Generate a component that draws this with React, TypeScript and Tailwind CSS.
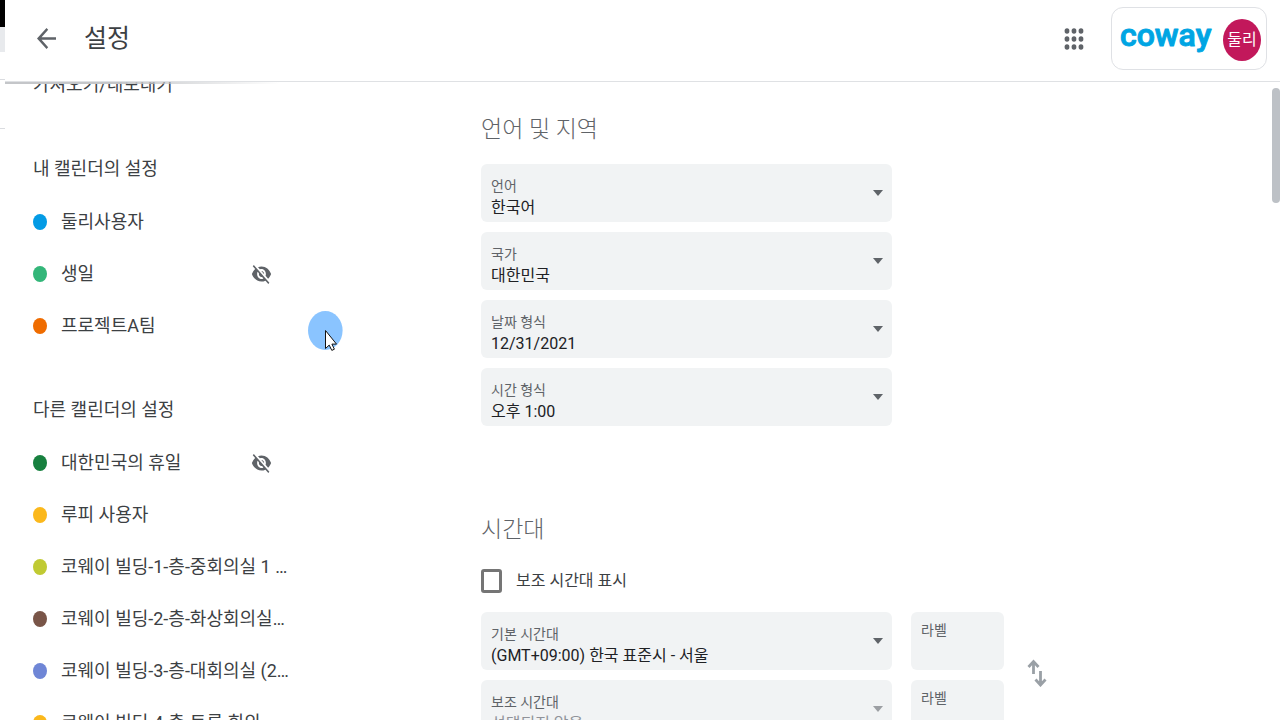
import { useId } from "react";
import { MdVisibilityOff } from "react-icons/md";
import clsx from "clsx";

type Calendar = { name: string; color: string; hidden?: boolean };

const MY_CALENDARS: Calendar[] = [
  { name: "둘리사용자", color: "bg-[#039be5]" },
  { name: "생일", color: "bg-[#33b679]", hidden: true },
  { name: "프로젝트A팀", color: "bg-[#ef6c00]" },
];

const OTHER_CALENDARS: Calendar[] = [
  { name: "대한민국의 휴일", color: "bg-[#17803f]", hidden: true },
  { name: "루피 사용자", color: "bg-[#fbb81c]" },
  { name: "코웨이 빌딩-1-층-중회의실 1 …", color: "bg-[#c0ca33]" },
  { name: "코웨이 빌딩-2-층-화상회의실…", color: "bg-[#795548]" },
  { name: "코웨이 빌딩-3-층-대회의실 (2…", color: "bg-[#6f86d6]" },
  { name: "코웨이 빌딩-4-층-토론 회의…", color: "bg-[#fbb81c]" },
];

function CalendarGroup({ title, items }: { title: string; items: Calendar[] }) {
  return (
    <section className="mt-8">
      <h2 className="mb-px flex h-[52px] items-center">{title}</h2>
      <ul>
        {items.map((item) => (
          <li key={item.name}>
            <a href="#" className="flex h-[52px] w-[239px] items-center gap-3.5 whitespace-nowrap">
              <span className={clsx("h-4 w-3.5 shrink-0 rounded-[50%]", item.color)} />
              <span className="flex-1">{item.name}</span>
              {item.hidden && (
                <MdVisibilityOff preserveAspectRatio="none" className="h-6 w-[21px] text-[#5f6368]" />
              )}
            </a>
          </li>
        ))}
      </ul>
    </section>
  );
}

function SelectField({ label, value, disabled }: { label: string; value: string; disabled?: boolean }) {
  const id = useId();
  return (
    <div className="relative h-[58px] rounded-md bg-[#f1f3f4] px-2.5 pt-3">
      <label htmlFor={id} className="block text-sm leading-5 text-[#5f6368]">
        {label}
      </label>
      <select
        id={id}
        disabled={disabled}
        className="block h-6 w-full appearance-none bg-transparent text-base leading-6 text-[#202124] disabled:text-[#90939a] disabled:opacity-100"
      >
        <option>{value}</option>
      </select>
      <svg
        viewBox="0 0 10 6"
        className={clsx(
          "pointer-events-none absolute top-[26px] right-[9px] h-1.5 w-2.5",
          disabled ? "fill-[#9c9fa3]" : "fill-[#5f6368]"
        )}
      >
        <path d="M0 0h10L5 6z" />
      </svg>
    </div>
  );
}

function LabelField() {
  const id = useId();
  return (
    <div className="h-[58px] rounded-md bg-[#f1f3f4] px-2.5 pt-2">
      <label htmlFor={id} className="block text-sm leading-5 text-[#5f6368]">
        라벨
      </label>
      <input id={id} type="text" className="block h-6 w-full bg-transparent text-base outline-none" />
    </div>
  );
}

function Header() {
  return (
    <header className="flex h-[82px] shrink-0 items-center border-b border-[#dfe1e4] pr-[13px] pb-1 pl-8">
      <button type="button" aria-label="뒤로">
        <svg viewBox="4 4 16 16" preserveAspectRatio="none" className="h-[21px] w-[19px] fill-[#5f6368]">
          <path d="M20 11H7.83l5.59-5.59L12 4l-8 8 8 8 1.41-1.41L7.83 13H20z" />
        </svg>
      </button>
      <h1 className="ml-7 text-[25px] leading-8 text-[#3c4043]">설정</h1>
      <button type="button" aria-label="앱" className="ml-auto">
        <svg viewBox="0 0 20 22" className="h-[22px] w-5 fill-[#5f6368]">
          {[3, 11, 19].map((y) =>
            [3, 10, 17].map((x) => <ellipse key={`${x}-${y}`} cx={x} cy={y} rx="2.4" ry="2.7" />)
          )}
        </svg>
      </button>
      <div className="ml-[27px] flex h-[63px] items-center rounded-xl border border-[#dfe1e5] pr-[5px] pl-2">
        <svg viewBox="0 0 93 40" className="h-10 w-[93px] overflow-visible" role="img" aria-label="coway">
          <text
            x="0"
            y="27"
            fontFamily="Roboto, sans-serif"
            fontSize="32"
            fontWeight="500"
            fill="#00a5e3"
            stroke="#00a5e3"
            strokeWidth="1"
            strokeLinejoin="round"
          >
            coway
          </text>
        </svg>
        <button
          type="button"
          className="mt-0.5 ml-2.5 h-[42px] w-[38px] rounded-[50%] bg-[#c2185b] text-base text-white"
        >
          둘리
        </button>
      </div>
    </header>
  );
}

function Pointer() {
  return (
    <div className="pointer-events-none absolute top-[311px] left-[308px]">
      <svg viewBox="0 0 35 42" className="h-[42px] w-[35px]">
        <ellipse cx="17.3" cy="19.5" rx="17.3" ry="19.5" fill="#8ac4ff" />
        <path
          d="M17.500 19.500v18l3.700-3.400 2.600 5.300 2.600-1.200-2.500-5.100h4.600z"
          fill="#fff"
          stroke="#111"
          strokeWidth="1"
        />
      </svg>
    </div>
  );
}

export default function App() {
  return (
    <div className="relative flex h-screen overflow-hidden bg-white font-['Roboto','Noto_Sans_CJK_KR',sans-serif] text-[#3c4043]">
      {/* sliver of the window behind */}
      <div className="w-[5px] shrink-0">
        <div className="h-[27px] bg-black" />
        <div className="h-[25px] bg-[#e8eaed]" />
        <div className="h-7 border-b border-[#dadce0]" />
        <div className="h-[49px] border-b border-[#dadce0]" />
      </div>

      <div className="flex min-w-0 flex-1 flex-col">
        <Header />
        <div className="relative flex min-h-0 flex-1 overflow-hidden">
          <div className="absolute top-0 left-0 h-0.5 w-[275px] bg-linear-to-r from-[#c4c6c9] from-40% to-transparent" />

          <nav className="-mt-[23px] w-[448px] shrink-0 pl-7 text-lg">
            <a href="#" className="flex h-[52px] items-center">
              가져오기/내보내기
            </a>
            <CalendarGroup title="내 캘린더의 설정" items={MY_CALENDARS} />
            <CalendarGroup title="다른 캘린더의 설정" items={OTHER_CALENDARS} />
          </nav>

          <main className="min-w-0 flex-1 pt-8 pl-7">
            <section>
              <h2 className="mb-[18px] text-[23px] leading-8 font-light text-[#5f6368]">언어 및 지역</h2>
              <div className="flex max-w-[411px] flex-col gap-2.5">
                <SelectField label="언어" value="한국어" />
                <SelectField label="국가" value="대한민국" />
                <SelectField label="날짜 형식" value="12/31/2021" />
                <SelectField label="시간 형식" value="오후 1:00" />
              </div>
            </section>

            <section className="mt-[88px]">
              <h2 className="mb-[18px] text-[23px] leading-8 font-light text-[#5f6368]">시간대</h2>
              <label className="mb-3.5 flex h-[34px] items-center gap-3.5 text-base">
                <input
                  type="checkbox"
                  className="h-6 w-[21px] appearance-none rounded-[3px] border-3 border-[#757575] checked:bg-[#1a73e8]"
                />
                보조 시간대 표시
              </label>
              <div className="flex items-center gap-[19px]">
                <div className="flex w-full max-w-[411px] flex-col gap-2.5">
                  <SelectField label="기본 시간대" value="(GMT+09:00) 한국 표준시 - 서울" />
                  <SelectField label="보조 시간대" value="선택되지 않음" disabled />
                </div>
                <div className="flex w-[93px] shrink-0 flex-col gap-2.5">
                  <LabelField />
                  <LabelField />
                </div>
                <button type="button" aria-label="시간대 바꾸기" className="mb-1 ml-1">
                  <svg
                    viewBox="0 0 20 28"
                    className="h-7 w-5 fill-none stroke-[#9aa0a6] stroke-[2.8]"
                  >
                    <path d="M6.500 15V3M1.500 8l5-5.500 5 5.500M13.500 12v13M8.500 20.500l5 5.500 5-5.500" />
                  </svg>
                </button>
              </div>
            </section>
          </main>

          <div className="mt-1.5 h-[115px] w-2 shrink-0 rounded-full bg-[#bdc1c6]" />
        </div>
      </div>

      <Pointer />
    </div>
  );
}
